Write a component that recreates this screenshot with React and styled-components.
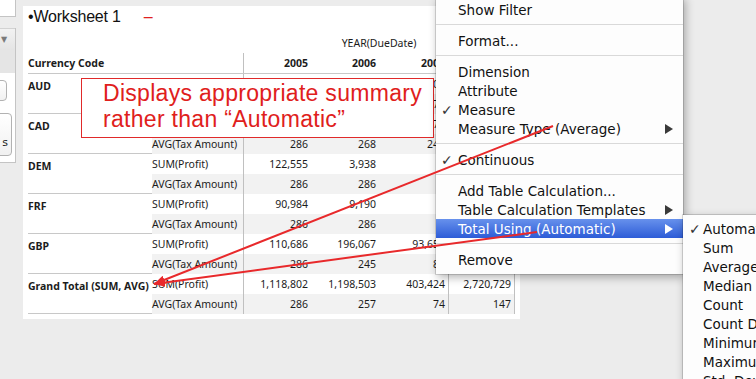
import React from 'react';
import styled, { createGlobalStyle, css } from 'styled-components';

const GlobalStyle = createGlobalStyle`
    html, body {
        margin: 0;
        padding: 0;
        background: #ececec;
        overflow: hidden;
    }
`;

const Page = styled.div`
    position: relative;
    width: 756px;
    height: 379px;
    overflow: hidden;
    display: flex;
    align-items: flex-start;
    background: #ececec;
`;

const Sidebar = styled.div`
    width: 16px;
    min-width: 0;
    flex: 0 0 16px;
    display: flex;
    flex-direction: column;
    overflow: hidden;
`;

const SideTop = styled.div`
    height: 16px;
    background: #fff;
    border-right: 1px solid #c4c4c4;
    border-bottom: 1px solid #c4c4c4;
`;

const SidePanel = styled.div`
    margin-top: 11px;
    height: 134px;
    background: #fff;
    border-right: 1px solid #c4c4c4;
    border-bottom: 1px solid #c4c4c4;
    display: flex;
    flex-direction: column;
    overflow: hidden;
`;

const PanelHead = styled.div`
    height: 22px;
    flex: 0 0 22px;
    box-sizing: border-box;
    border-top: 1px solid #d2d2d2;
    background: linear-gradient(#f2f2f2, #e4e4e4);
    display: flex;
    align-items: center;
    padding-left: 1px;
    font: 8px "DejaVu Sans", sans-serif;
    color: #7a7a7a;
`;

const PanelBand = styled.div`
    height: 23px;
    flex: 0 0 23px;
    background: #e5e5e5;
`;

const PanelBody = styled.div`
    display: flex;
    flex-direction: column;
    align-items: flex-end;
    padding-top: 7px;
    gap: 12px;
`;

const SideButton = styled.div`
    flex: 0 0 auto;
    width: ${p => p.$w}px;
    height: ${p => p.$h}px;
    margin-right: ${p => p.$right}px;
    box-sizing: border-box;
    border: 1px solid #b2b2b2;
    border-radius: 4px;
    background: linear-gradient(#ffffff, #f1f1f1);
    display: flex;
    align-items: flex-end;
    justify-content: flex-end;
    padding: 0 3px 6px 0;
    font: 11px "DejaVu Sans", sans-serif;
    color: #222;
`;

const Sheet = styled.div`
    margin: 6px 0 0 7px;
    width: 487px;
    flex: 0 0 487px;
    padding: 0 5px 5px;
    background: #fff;
    font-family: "Noto Sans", "DejaVu Sans", sans-serif;
    font-size: 10.5px;
    color: #1c1c1c;
`;

const Title = styled.div`
    height: 27px;
    line-height: 22px;
    font-family: "Liberation Sans", Arial, sans-serif;
    font-size: 16px;
    letter-spacing: -0.2px;
    color: #111;
    white-space: nowrap;
`;

const Collapse = styled.span`
    color: #e02020;
    margin-left: 23px;
`;

const AxisTitle = styled.div`
    height: 20px;
    line-height: 20px;
    margin-left: 215px;
    text-align: center;
`;

const HeaderRow = styled.div`
    display: grid;
    grid-template-columns: 215px 68px 68px 69px 67px;
    height: 20px;
    border-bottom: 1px solid #c8c8c8;
    line-height: 20px;
    font-weight: bold;
`;

const Cell = styled.div`
    padding-right: 3px;
    text-align: right;
    white-space: nowrap;
    overflow: hidden;
    ${p => p.$sep && css`border-left: 1px solid #c0c0c0;`}
    ${p => p.$end && css`border-right: 1px solid #c0c0c0;`}
`;

const LeadCell = styled.div`
    white-space: nowrap;
`;

const Group = styled.div`
    display: flex;
    height: 40px;
    box-sizing: border-box;
    border-bottom: 1px solid #c8c8c8;
`;

const GroupLabel = styled.div`
    width: 124px;
    flex: 0 0 124px;
    padding-top: 2px;
    line-height: 20px;
    font-weight: bold;
    white-space: nowrap;
`;

const Measures = styled.div`
    flex: 1;
    display: flex;
    flex-direction: column;
`;

const MeasureRow = styled.div`
    flex: 1;
    display: grid;
    grid-template-columns: 91px 68px 68px 69px 67px;
    line-height: 20px;
    background: ${p => (p.$shade ? '#f2f2f2' : '#fff')};
`;

const Callout = styled.div`
    position: absolute;
    left: 81px;
    top: 78px;
    width: 353px;
    height: 60px;
    box-sizing: border-box;
    padding: 1px 0 0 21px;
    border: 1px solid #e02a2a;
    background: #fff;
    font-family: "Liberation Sans", Arial, sans-serif;
    font-size: 23px;
    letter-spacing: 0.3px;
    line-height: 26px;
    color: #e0201c;
    z-index: 1;
`;

const Menu = styled.div`
    position: absolute;
    left: 436px;
    top: -4px;
    width: 247px;
    padding: 4px 0 5px;
    background: #fdfdfd;
    box-shadow: 0 0 0 1px rgba(0, 0, 0, 0.14), 2px 3px 9px rgba(0, 0, 0, 0.32);
    font-family: "DejaVu Sans", "Lucida Grande", sans-serif;
    font-size: 13.5px;
    color: #111;
    z-index: 2;
`;

const SubMenu = styled(Menu)`
    left: 683px;
    top: 215px;
    width: 130px;
    padding-bottom: 0;
    z-index: 3;
`;

const Item = styled.div`
    display: flex;
    align-items: center;
    height: 19px;
    line-height: 20px;
    white-space: nowrap;
    ${p => p.$active && css`
        background: linear-gradient(#6791ec, #2d5cd7);
        color: #fff;
    `}
`;

const Check = styled.span`
    width: ${p => p.$w}px;
    flex: 0 0 ${p => p.$w}px;
    box-sizing: border-box;
    padding-left: ${p => p.$pad}px;
    font-size: 14px;
    color: #333;
`;

const Arrow = styled.span`
    margin-left: auto;
    margin-right: 10px;
    width: 0;
    height: 0;
    border-top: 5px solid transparent;
    border-bottom: 5px solid transparent;
    border-left: 8px solid ${p => (p.$light ? '#fff' : '#3a3a3a')};
`;

const Separator = styled.div`
    height: 1px;
    margin: 5px 0 6px;
    background: #d9d9d9;
`;

const Overlay = styled.svg`
    position: absolute;
    left: 0;
    top: 0;
    z-index: 4;
    pointer-events: none;
`;

const years = ['2005', '2006', '2007', ''];

const groups = [
    { code: 'AUD', sum: ['95,034', '88,012', '31,207', '214,253'], avg: ['286', '271', '78', '162'] },
    { code: 'CAD', sum: ['118,274', '104,536', '43,876', '266,686'], avg: ['286', '268', '242', '171'] },
    { code: 'DEM', sum: ['122,555', '3,938', '', '126,493'], avg: ['286', '286', '', '286'] },
    { code: 'FRF', sum: ['90,984', '9,190', '', '100,174'], avg: ['286', '286', '', '286'] },
    { code: 'GBP', sum: ['110,686', '196,067', '93,658', '400,411'], avg: ['286', '245', '85', '178'] },
    { code: 'Grand Total (SUM, AVG)', sum: ['1,118,802', '1,198,503', '403,424', '2,720,729'], avg: ['286', '257', '74', '147'] },
];

const menuItems = [
    { label: 'Show Filter' },
    { sep: true },
    { label: 'Format...' },
    { sep: true },
    { label: 'Dimension' },
    { label: 'Attribute' },
    { label: 'Measure', checked: true },
    { label: 'Measure Type (Average)', sub: true },
    { sep: true },
    { label: 'Continuous', checked: true },
    { sep: true },
    { label: 'Add Table Calculation...' },
    { label: 'Table Calculation Templates', sub: true },
    { label: 'Total Using (Automatic)', sub: true, active: true },
    { sep: true },
    { label: 'Remove' },
];

const totalOptions = ['Automatic', 'Sum', 'Average', 'Median', 'Count', 'Count Distinct', 'Minimum', 'Maximum', 'Std. Dev', 'Std. Dev (Pop.)'];

function Values({ values }) {
    return values.map((v, i) => (
        <Cell key={i} $sep={i === 0 || i === 3} $end={i === 3}>{v}</Cell>
    ));
}

function CurrencyGroup({ group }) {
    return (
        <Group>
            <GroupLabel>{group.code}</GroupLabel>
            <Measures>
                <MeasureRow>
                    <LeadCell>SUM(Profit)</LeadCell>
                    <Values values={group.sum}/>
                </MeasureRow>
                <MeasureRow $shade>
                    <LeadCell>AVG(Tax Amount)</LeadCell>
                    <Values values={group.avg}/>
                </MeasureRow>
            </Measures>
        </Group>
    );
}

function ContextMenu() {
    return (
        <Menu>
            {menuItems.map((item, i) => item.sep ? <Separator key={i}/> : (
                <Item key={i} $active={item.active}>
                    <Check $w={22} $pad={5}>{item.checked ? '✓' : ''}</Check>
                    {item.label}
                    {item.sub && <Arrow $light={item.active}/>}
                </Item>
            ))}
        </Menu>
    );
}

function TotalMenu() {
    return (
        <SubMenu>
            {totalOptions.map((label, i) => (
                <Item key={label}>
                    <Check $w={20} $pad={6}>{i === 0 ? '✓' : ''}</Check>
                    {label}
                </Item>
            ))}
        </SubMenu>
    );
}

function Pointers() {
    return (
        <Overlay width="756" height="379" viewBox="0 0 756 379">
            <defs>
                <marker id="head" markerUnits="userSpaceOnUse" markerWidth="12" markerHeight="9" refX="11" refY="4.5" orient="auto">
                    <path d="M0,0 L11,4.5 L0,9 z" fill="#e8292b"/>
                </marker>
            </defs>
            <line x1="553" y1="126" x2="154" y2="284" stroke="#e8292b" strokeWidth="2" markerEnd="url(#head)"/>
            <line x1="537" y1="232" x2="154" y2="284" stroke="#e8292b" strokeWidth="2" markerEnd="url(#head)"/>
        </Overlay>
    );
}

export default function App() {
    return (
        <Page>
            <GlobalStyle/>
            <Sidebar>
                <SideTop/>
                <SidePanel>
                    <PanelHead>▼</PanelHead>
                    <PanelBand/>
                    <PanelBody>
                        <SideButton $w={40} $h={21} $right={8}/>
                        <SideButton $w={60} $h={43} $right={3}>s</SideButton>
                    </PanelBody>
                </SidePanel>
            </Sidebar>
            <Sheet>
                <Title>•Worksheet 1<Collapse>–</Collapse></Title>
                <AxisTitle>YEAR(DueDate)</AxisTitle>
                <HeaderRow>
                    <LeadCell>Currency Code</LeadCell>
                    {years.map((y, i) => (
                        <Cell key={i} $sep={i === 0 || i === 3} $end={i === 3}>{y}</Cell>
                    ))}
                </HeaderRow>
                {groups.map(g => <CurrencyGroup key={g.code} group={g}/>)}
            </Sheet>
            <Callout>
                Displays appropriate summary<br/>
                rather than “Automatic”
            </Callout>
            <ContextMenu/>
            <TotalMenu/>
            <Pointers/>
        </Page>
    );
}
